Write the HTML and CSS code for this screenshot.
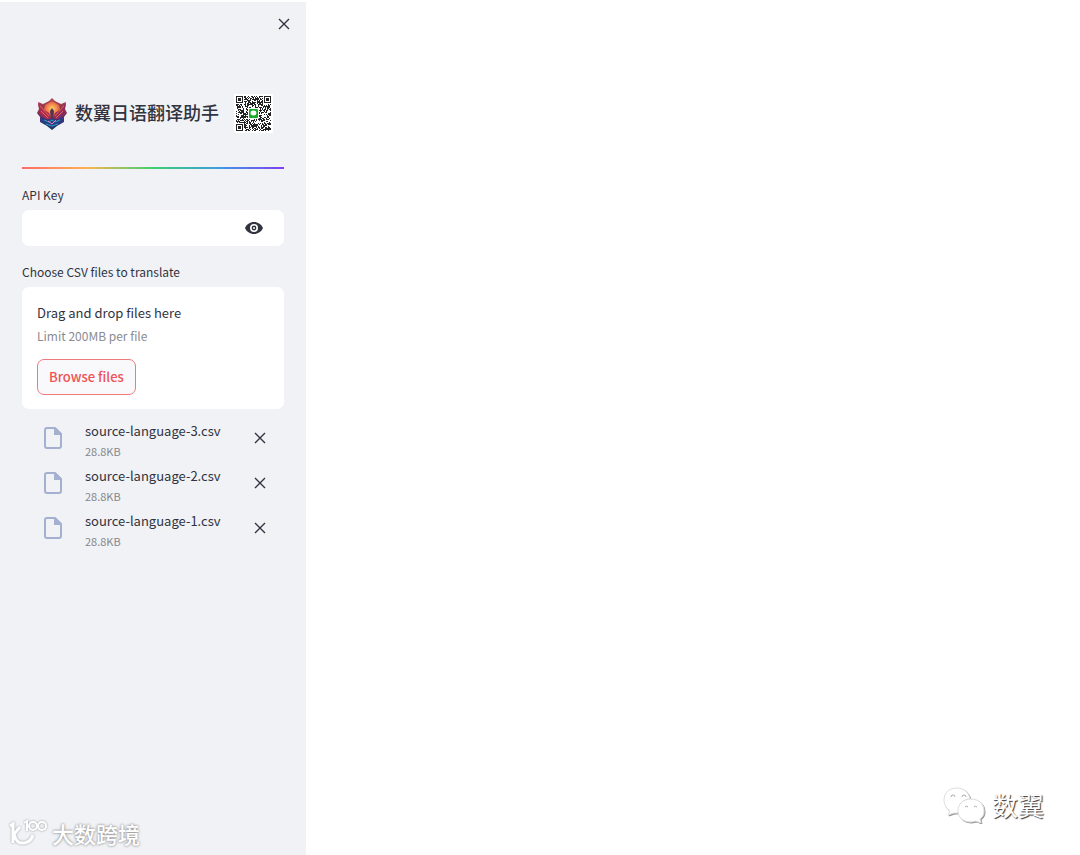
FILE: index.html
```html
<!DOCTYPE html>
<html lang="zh-CN">
<head>
    <meta charset="UTF-8">
    <meta name="viewport" content="width=device-width, initial-scale=1.0">
    <title>数翼日语翻译助手</title>
    <link rel="stylesheet" href="styles.css">
</head>
<body>
    <svg class="symbols" aria-hidden="true">
        <symbol id="icon-close" viewBox="0 0 12 12">
            <path d="M1 1L11 11M11 1L1 11" fill="none" stroke="currentColor" stroke-width="1.4"/>
        </symbol>
        <symbol id="icon-file" viewBox="0 0 18 22">
            <path d="M3 1H11L17 7V19Q17 21 15 21H3Q1 21 1 19V3Q1 1 3 1Z" fill="none" stroke="currentColor" stroke-width="2"/>
            <path d="M10 1H12L17 6V8H10Z" fill="currentColor"/>
        </symbol>
    </svg>

    <aside class="sidebar">
        <div class="sidebar-top">
            <button class="icon-button" type="button" aria-label="Close sidebar"><svg class="close-icon"><use href="#icon-close"/></svg></button>
        </div>

        <header class="brand">
            <svg class="brand-logo" viewBox="0 0 30 32" aria-hidden="true">
                <defs>
                    <linearGradient id="shield" x1="0" y1="0" x2="0" y2="1">
                        <stop offset="0" stop-color="#b04a50"/>
                        <stop offset="0.45" stop-color="#85304f"/>
                        <stop offset="0.7" stop-color="#40327c"/>
                        <stop offset="1" stop-color="#173860"/>
                    </linearGradient>
                    <radialGradient id="glow" cx="0.5" cy="0.45" r="0.55">
                        <stop offset="0" stop-color="#ffd06a"/>
                        <stop offset="0.6" stop-color="#ee7a48"/>
                        <stop offset="1" stop-color="#b53c4d"/>
                    </radialGradient>
                </defs>
                <path d="M15 0L18 3L24 6L29 4L28 11L30 15L27 19L27 24L20 28L15 32L10 28L3 24L3 19L0 15L2 11L1 4L6 6L12 3Z" fill="url(#shield)"/>
                <path d="M15 3L22 7L24 15L15 20L6 15L8 7Z" fill="url(#glow)"/>
                <path d="M1 5L6 11L12 15L14 21L9 21L3 16Z" fill="#a62d50"/>
                <path d="M29 5L24 11L18 15L16 21L21 21L27 16Z" fill="#8e2a5c"/>
                <path d="M3 8L12 18M27 8L18 18M4 13L11 20M26 13L19 20" fill="none" stroke="#ee6350"/>
                <path d="M15 10L17 13L16 23H14L13 13Z" fill="#593252"/>
                <path d="M4 19L11 23L15 20L19 23L26 19L25 24L15 30L5 24Z" fill="#283c83"/>
                <path d="M7 22L12 24L15 22L18 24L23 22M9 26L15 28L21 26" fill="none" stroke="#28a3bd"/>
                <path d="M11 23L15 26L19 22" fill="none" stroke="#e286bd"/>
            </svg>
            <h1>数翼日语翻译助手</h1>
            <svg class="brand-qr" viewBox="0 0 39 39" role="img" aria-label="WeChat QR code">
                <rect width="39" height="39" fill="#fff"/>
                <g id="qr-modules" fill="#222"></g>
                <rect x="14" y="14" width="11" height="11" rx="1" fill="#fff"/>
                <rect x="15" y="15" width="9" height="9" rx="1" fill="#18ad26"/>
                <ellipse cx="19.5" cy="19" rx="3" ry="2.4" fill="#fff"/>
            </svg>
        </header>

        <div class="rainbow"></div>

        <form>
            <label class="field-label" for="api-key">API Key</label>
            <div class="key-field">
                <input type="password" id="api-key" autocomplete="off">
                <button class="icon-button" type="button" id="toggle-key" aria-label="Show password">
                    <svg class="eye-icon" viewBox="0 0 18 12"><path fill="currentColor" fill-rule="evenodd" d="M9 0C5 0 1.500 2.500 0 6C1.500 9.500 5 12 9 12S16.500 9.500 18 6C16.500 2.500 13 0 9 0ZM9 10A4 4 0 1 1 9 2A4 4 0 0 1 9 10ZM9 3.600A2.400 2.400 0 1 0 9 8.400A2.400 2.400 0 0 0 9 3.600Z"/><circle cx="9" cy="6" r="1" fill="#fff"/></svg>
                </button>
            </div>

            <label class="field-label" for="csv-files">Choose CSV files to translate</label>
            <div class="dropzone">
                <p class="drop-title">Drag and drop files here</p>
                <p class="drop-limit">Limit 200MB per file</p>
                <input type="file" id="csv-files" accept=".csv" multiple hidden>
                <button class="browse" type="button" id="browse">Browse files</button>
            </div>
        </form>

        <ul class="files">
            <li>
                <svg class="file-icon"><use href="#icon-file"/></svg>
                <div class="file-info">
                    <span class="file-name">source-language-3.csv</span>
                    <span class="file-size">28.8KB</span>
                </div>
                <button class="icon-button" type="button" aria-label="Remove source-language-3.csv"><svg class="close-icon"><use href="#icon-close"/></svg></button>
            </li>
            <li>
                <svg class="file-icon"><use href="#icon-file"/></svg>
                <div class="file-info">
                    <span class="file-name">source-language-2.csv</span>
                    <span class="file-size">28.8KB</span>
                </div>
                <button class="icon-button" type="button" aria-label="Remove source-language-2.csv"><svg class="close-icon"><use href="#icon-close"/></svg></button>
            </li>
            <li>
                <svg class="file-icon"><use href="#icon-file"/></svg>
                <div class="file-info">
                    <span class="file-name">source-language-1.csv</span>
                    <span class="file-size">28.8KB</span>
                </div>
                <button class="icon-button" type="button" aria-label="Remove source-language-1.csv"><svg class="close-icon"><use href="#icon-close"/></svg></button>
            </li>
        </ul>
    </aside>

    <main></main>

    <div class="watermark watermark-left">
        <svg class="mark-100" viewBox="0 0 40 28" aria-hidden="true">
            <path d="M2 7L5 5V24M12 8L6 15Q8 25 16 24Q23 23 25 16" fill="none" stroke="#fff" stroke-width="3"/>
            <path d="M16 4L19 2V12" fill="none" stroke="#fff" stroke-width="2"/>
            <circle cx="25" cy="7" r="4" fill="none" stroke="#fff" stroke-width="2"/>
            <circle cx="34" cy="7" r="4" fill="none" stroke="#fff" stroke-width="2"/>
        </svg>
        <span>大数跨境</span>
    </div>

    <div class="watermark watermark-right">
        <svg class="mark-wechat" viewBox="0 0 42 36" aria-hidden="true">
            <path d="M14 1C6 1 1 6 1 13C1 18 4 22 7 24L5 28L11 26L16 26C15 17 20 12 27 12C26 6 21 1 14 1Z"/>
            <path d="M28 12C20 12 15 17 15 24C15 31 21 35 28 35L33 34L38 36L37 32C40 30 41 27 41 24C41 17 36 12 28 12Z"/>
            <path class="eyes" d="M8 10A2 2 0 0 1 12 10M19 10A2 2 0 0 1 23 10M22 20A2 2 0 0 1 25 20M31 20A2 2 0 0 1 34 20"/>
        </svg>
        <span>数翼</span>
    </div>

    <script src="script.js"></script>
</body>
</html>
```
FILE: styles.css
```css
* {
    box-sizing: border-box;
}
body {
    display: flex;
    min-height: 100vh;
    margin: 0;
    padding-top: 2px;
    background-color: #fff;
    color: #31333f;
    font-family: "Noto Sans CJK SC", sans-serif;
    font-size: 13px;
    line-height: 20px;
}
main {
    flex: 1;
}
h1, p, ul {
    margin: 0;
    padding: 0;
}
button, input {
    font: inherit;
    color: inherit;
}
.symbols {
    position: absolute;
    width: 0;
    height: 0;
}
.sidebar {
    width: 306px;
    padding: 0 22px;
    background-color: #f0f2f6;
}
.sidebar-top {
    display: flex;
    justify-content: flex-end;
    padding-top: 16px;
}
.icon-button {
    display: flex;
    padding: 0;
    border: none;
    background: none;
    cursor: pointer;
}
.close-icon {
    width: 12px;
    height: 12px;
}
.sidebar-top .icon-button {
    margin-right: -6px;
}
.brand {
    display: flex;
    align-items: center;
    margin-top: 64px;
    padding: 0 11px 0 15px;
}
.brand-logo {
    width: 30px;
    height: 32px;
    margin-right: 8px;
}
.brand h1 {
    padding-bottom: 4px;
    font-size: 18px;
    font-weight: 500;
    line-height: 24px;
    white-space: nowrap;
}
.brand-qr {
    width: 39px;
    height: 39px;
    margin-left: auto;
}
.rainbow {
    height: 2px;
    margin: 34px 0 16px;
    background: linear-gradient(to right, #ff6b6b, #fdb451 25%, #3bd16f 50%, #3f9be0 75%, #803df5);
}
.field-label {
    display: block;
    margin-bottom: 5px;
    font-size: 12px;
}
.key-field {
    display: flex;
    align-items: center;
    height: 36px;
    margin-bottom: 16px;
    padding-right: 21px;
    border-radius: 7px;
    background-color: #fff;
}
.key-field input {
    flex: 1;
    min-width: 0;
    height: 100%;
    padding: 0 12px;
    border: none;
    outline: none;
    background: none;
}
.eye-icon {
    width: 18px;
    height: 12px;
}
.dropzone {
    padding: 14px 15px;
    border-radius: 7px;
    background-color: #fff;
}
.drop-title {
    line-height: 24px;
}
.drop-limit {
    margin-bottom: 12px;
    color: #8b8c92;
    font-size: 12px;
    line-height: 22px;
}
.browse {
    height: 36px;
    padding: 0 11px;
    border: 1px solid #ee7a7d;
    border-radius: 7px;
    background-color: #f9f9fb;
    color: #f05357;
    font-weight: 500;
    cursor: pointer;
}
.files {
    padding: 12px 18px 0 22px;
    list-style: none;
}
.files li {
    display: flex;
    align-items: center;
    height: 34px;
    margin-bottom: 11px;
}
.file-icon {
    width: 18px;
    height: 22px;
    margin-right: 23px;
    color: #a3b0d0;
}
.file-info {
    display: flex;
    flex: 1;
    flex-direction: column;
    align-self: flex-start;
}
.file-size {
    color: #85868d;
    font-size: 11px;
}
.watermark {
    position: absolute;
    display: flex;
    align-items: center;
    color: #fff;
}
.watermark-left {
    bottom: 8px;
    left: 8px;
    gap: 4px;
    font-size: 22px;
    font-weight: 500;
    line-height: 28px;
    text-shadow: 0 0 3px #888, 0 0 2px #bbb;
}
.mark-100 {
    width: 40px;
    height: 28px;
    filter: drop-shadow(0 0 1px #999);
}
.watermark-right {
    right: 36px;
    bottom: 32px;
    gap: 7px;
    font-size: 26px;
    line-height: 36px;
    text-shadow: 1px 1px 1px #333;
}
.mark-wechat {
    width: 42px;
    height: 36px;
    fill: #fff;
    stroke: #ddd;
    filter: drop-shadow(1px 1px 0 #999);
}
.mark-wechat .eyes {
    fill: none;
    stroke: #aaa;
}
```
FILE: script.js
```javascript
const keyInput = document.getElementById('api-key');

document.getElementById('toggle-key').addEventListener('click', function() {
    keyInput.type = keyInput.type === 'password' ? 'text' : 'password';
});

document.getElementById('browse').addEventListener('click', function() {
    document.getElementById('csv-files').click();
});

// Small decorative QR code: three finder squares and scattered modules.
function drawCode() {
    const size = 35;
    let seed = 17;
    let d = '';
    for (let y = 0; y < size; y++) {
        for (let x = 0; x < size; x++) {
            const left = x < 8;
            const top = y < 8;
            const right = x >= size - 8;
            const bottom = y >= size - 8;
            let dark;
            if ((left && top) || (right && top) || (left && bottom)) {
                const fx = right ? x - size + 7 : x;
                const fy = bottom ? y - size + 7 : y;
                const ring = Math.max(Math.abs(fx - 3), Math.abs(fy - 3));
                dark = ring === 3 || ring < 2;
            } else {
                seed = (seed * 16807) % 2147483647;
                dark = seed / 2147483647 < 0.56;
            }
            if (dark) {
                d += `M${x + 2} ${y + 2}h1v1h-1z`;
            }
        }
    }
    const path = document.createElementNS('http://www.w3.org/2000/svg', 'path');
    path.setAttribute('d', d);
    document.getElementById('qr-modules').appendChild(path);
}

drawCode();
```
